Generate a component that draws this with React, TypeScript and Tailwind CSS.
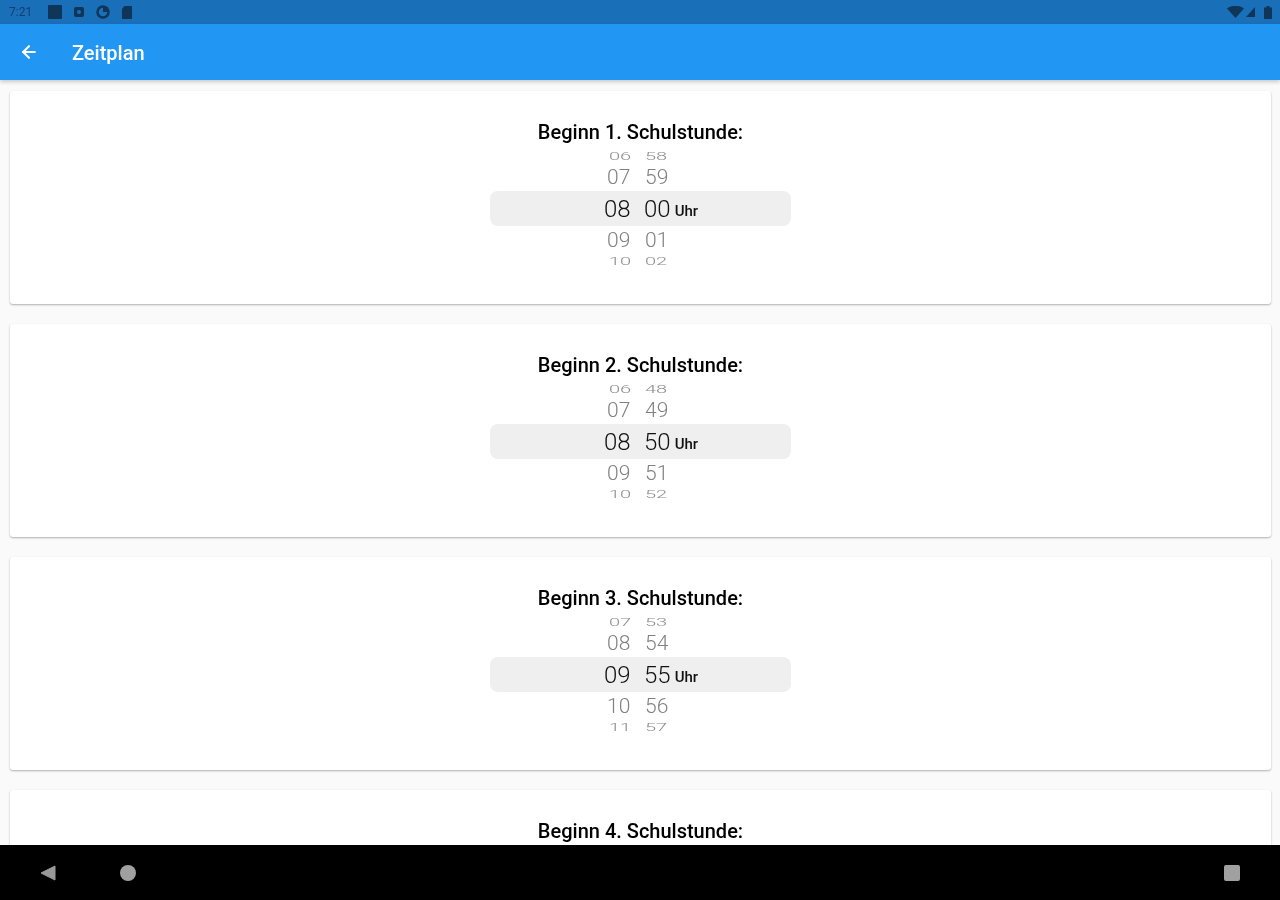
import { ArrowLeft } from "lucide-react";

const cards = [
  { n: 1, hours: ["06", "07", "08", "09", "10"], mins: ["58", "59", "00", "01", "02"] },
  { n: 2, hours: ["06", "07", "08", "09", "10"], mins: ["48", "49", "50", "51", "52"] },
  { n: 3, hours: ["07", "08", "09", "10", "11"], mins: ["53", "54", "55", "56", "57"] },
];

const StatusBar = () => (
  <div className="flex h-6 shrink-0 items-center bg-[#1a6fb9] pl-[9px] pr-2 text-[#123f6e]">
    <span className="w-[39px] text-xs blur-[0.5px]">7:21</span>
    <div className="h-[14px] w-[14px] rounded-[1px] bg-[#0f3558] blur-[0.5px]" />
    <div className="ml-3 flex h-[10px] w-[10px] items-center justify-center rounded-[2px] bg-[#0f3558] blur-[0.5px]">
      <div className="h-1 w-1 rounded-full bg-[#1a6fb9]" />
    </div>
    <svg className="ml-3 blur-[0.5px]" width="14" height="14" viewBox="0 0 14 14">
      <circle cx="7" cy="7" r="5.5" fill="none" stroke="#0f3558" strokeWidth="2.5" />
      <path d="M7 2h5v5H7z" fill="#0f3558" />
    </svg>
    <svg className="ml-3 blur-[0.5px]" width="10" height="13" viewBox="0 0 10 13">
      <path d="M2.5 0H10v13H0V3z" fill="#0f3558" />
    </svg>
    <div className="ml-auto flex items-center blur-[0.5px]">
      <svg width="17" height="12" viewBox="0 0 17 12">
        <path d="M0 2.5C5-1 12-1 17 2.5L8.5 12z" fill="#0f3558" />
      </svg>
      <svg className="ml-[2px]" width="9" height="10" viewBox="0 0 9 10">
        <path d="M9 0v10H0z" fill="#0f3558" />
      </svg>
      <svg className="ml-[9px]" width="8" height="13" viewBox="0 0 8 13">
        <path d="M2.5 0h3v1.5H8V13H0V1.5h2.5z" fill="#0f3558" />
      </svg>
    </div>
  </div>
);

const Wheel = ({ hours, mins }: { hours: string[]; mins: string[] }) => (
  <div className="w-[301px] font-light blur-[0.5px]">
    <div className="flex h-[14px] items-center pl-[119px] text-xl leading-none text-[#8c8c8c]">
      <span className="w-[22px] scale-y-[.5]">{hours[0]}</span>
      <span className="ml-[14px] scale-y-[.5]">{mins[0]}</span>
    </div>
    <div className="flex h-7 items-center pl-[117px] pt-px text-[21px] leading-none text-[#808080]">
      <span className="w-6">{hours[1]}</span>
      <span className="ml-[14px]">{mins[1]}</span>
    </div>
    <div className="flex h-[35px] items-center rounded-lg bg-[#efefef] pl-[114px] text-2xl leading-none text-[#111111]">
      <span className="w-[27px]">{hours[2]}</span>
      <span className="ml-[13px]">{mins[2]}</span>
      <span className="ml-1 mt-[5px] text-[15px] font-medium text-[#111111]">Uhr</span>
    </div>
    <div className="flex h-7 items-center pl-[117px] text-[21px] leading-none text-[#808080]">
      <span className="w-6">{hours[3]}</span>
      <span className="ml-[14px]">{mins[3]}</span>
    </div>
    <div className="flex h-[13px] items-center pl-[119px] text-xl leading-none text-[#8c8c8c]">
      <span className="w-[22px] scale-y-[.5]">{hours[4]}</span>
      <span className="ml-[14px] scale-y-[.5]">{mins[4]}</span>
    </div>
  </div>
);

const Title = ({ n }: { n: number }) => (
  <div className="mb-[6px] h-[22px] text-center text-xl font-medium leading-[22px] text-black blur-[0.4px]">
    Beginn {n}. Schulstunde:
  </div>
);

export default function App() {
  return (
    <div className="flex h-[900px] w-[1280px] flex-col overflow-hidden bg-[#fafafa] font-['Roboto',sans-serif]">
      <StatusBar />
      <div className="z-10 flex h-14 shrink-0 items-center bg-[#2196f3] pl-[19px] text-white shadow-[0_2px_4px_rgba(0,0,0,0.2)]">
        <ArrowLeft className="blur-[0.4px]" size={20} strokeWidth={2.5} />
        <span className="ml-[33px] mt-px text-xl font-medium blur-[0.4px]">Zeitplan</span>
      </div>
      <div className="flex min-h-0 flex-1 flex-col gap-5 overflow-hidden pl-[10px] pr-[9px] pt-[11px]">
        {cards.map((c) => (
          <div
            key={c.n}
            className="flex h-[213px] shrink-0 flex-col items-center rounded-[3px] bg-white pt-[30px] shadow-[0_1px_2px_rgba(0,0,0,0.3)]"
          >
            <Title n={c.n} />
            <Wheel hours={c.hours} mins={c.mins} />
          </div>
        ))}
        <div className="flex h-[213px] shrink-0 flex-col items-center rounded-[3px] bg-white pt-[30px] shadow-[0_1px_2px_rgba(0,0,0,0.3)]">
          <Title n={4} />
        </div>
      </div>
      <div className="z-10 flex h-[55px] shrink-0 items-center bg-black pl-10 pr-10">
        <svg className="blur-[0.5px]" width="16" height="16" viewBox="0 0 16 16">
          <path d="M15 1v14L1 8z" fill="#999999" stroke="#999999" strokeLinejoin="round" />
        </svg>
        <div className="ml-[64px] h-4 w-4 rounded-full bg-[#a0a0a0] blur-[0.5px]" />
        <div className="ml-auto h-4 w-4 rounded-[2px] bg-[#a0a0a0] blur-[0.5px]" />
      </div>
    </div>
  );
}
